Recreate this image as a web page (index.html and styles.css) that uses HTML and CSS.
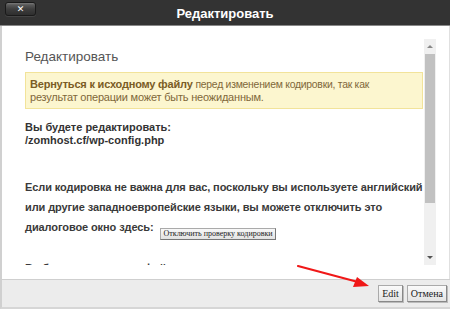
FILE: index.html
```html
<!DOCTYPE html>
<html>
<head>
<meta charset="utf-8">
<link rel="stylesheet" href="styles.css">
</head>
<body>
<div class="dialog">
  <div class="titlebar">
    <button class="close">&#x2715;</button>
    <div class="title">Редактировать</div>
  </div>
  <div class="main">
    <div class="scroller">
      <div class="content">
        <h2 class="heading">Редактировать</h2>
        <div class="warning"><b>Вернуться к исходному файлу</b> <span class="tight">перед изменением кодировки, так как</span> результат операции может быть неожиданным.</div>
        <div class="file">Вы будете редактировать:<br>/zomhost.cf/wp-config.php</div>
        <p class="para">Если кодировка не важна для вас, поскольку вы используете английский или другие западноевропейские языки, вы можете отключить это диалоговое окно здесь: <button class="smallbtn">Отключить проверку кодировки</button></p>
        <p class="cut">Выберите кодировку файла для редактирования</p>
      </div>
      <div class="vscroll">
        <div class="arrow up"></div>
        <div class="thumb"></div>
        <div class="spacer"></div>
        <div class="arrow down"></div>
      </div>
    </div>
  </div>
  <div class="footer">
    <button class="btn">Edit</button>
    <button class="btn">Отмена</button>
  </div>
  <svg class="pointer" width="450" height="309" viewBox="0 0 450 309">
    <line x1="298" y1="266" x2="358" y2="282" stroke="#f01818" stroke-width="2.2" stroke-linecap="round"/>
    <polygon points="369,286 353,287 357,277" fill="#f01818"/>
  </svg>
</div>
</body>
</html>
```
FILE: styles.css
```css
* { box-sizing: border-box; }
html, body { margin: 0; padding: 0; background: #fff; }
body { width: 450px; height: 309px; overflow: hidden; font-family: "Liberation Sans", Arial, sans-serif; }
.dialog { position: relative; width: 450px; height: 309px; display: flex; flex-direction: column; }
.titlebar {
  height: 26px; background: #333333; border-bottom: 1px solid #888;
  display: flex; align-items: center; position: relative;
}
.close {
  position: absolute; left: 5px; top: 2px; width: 31px; height: 14px;
  border: 1px solid #1a1a1a; border-radius: 3px; padding: 0;
  background: linear-gradient(#7a7a7a 0, #585858 2px, #3e3e3e 50%, #2e2e2e 100%);
  color: #fff; font: bold 9px/12px "DejaVu Sans", sans-serif; text-align: center;
  box-shadow: 0 1px 0 #444;
}
.title {
  flex: 1; text-align: center; color: #fff; font-weight: bold; font-size: 13px;
  font-family: "Liberation Sans", Arial, sans-serif; padding-top: 1px;
}
.main {
  flex: 1; border-left: 2px solid #d0d0d0; border-right: 1px solid #e0e0e0;
  padding: 13px 13px 14px 8px; min-height: 0;
}
.scroller { height: 100%; display: flex; overflow: hidden; }
.content { flex: 1; padding-left: 15px; padding-right: 1px; overflow: hidden; min-width: 0; }
.heading { margin: 9px 0 6px; font-weight: normal; font-size: 13.5px; color: #555; line-height: 18px; }
.warning {
  background: #fcf6cf; border: 1px solid #f2e39a; color: #80683a;
  font-size: 11px; line-height: 13px; padding: 5px 5px 4px 4px; letter-spacing: -0.2px;
}
.warning b { color: #7a5c25; }
.warning .tight { font-size: 10.4px; letter-spacing: -0.25px; }
.file { margin-top: 12px; font-weight: bold; font-size: 11px; line-height: 13px; color: #333; }
.para { margin: 30px 0 0; font-size: 11px; line-height: 20px; color: #3a3a3a; font-weight: bold; letter-spacing: -0.1px; }
.smallbtn {
  font: 8px/10px "Liberation Serif", "Times New Roman", serif; color: #222; letter-spacing: 0;
  background: linear-gradient(#f8f8f8, #e2e2e2); border: 1px solid #aaa;
  border-right-color: #777; border-bottom-color: #777; padding: 0 2px; margin-left: 4px;
  vertical-align: -4.5px;
}
.cut { margin: 18px 0 0; font-size: 11px; line-height: 20px; color: #3a3a3a; font-weight: bold; }
.vscroll { width: 12px; background: #f0f0f0; display: flex; flex-direction: column; }
.arrow { height: 15px; position: relative; }
.arrow::after {
  content: ""; position: absolute; left: 3px; border-left: 3px solid transparent; border-right: 3px solid transparent;
}
.arrow.up::after { top: 6px; border-bottom: 3px solid #888; }
.arrow.down::after { top: 6px; border-top: 3px solid #555; }
.thumb { height: 149px; background: #c1c1c1; margin: 0 1px; }
.spacer { flex: 1; }
.footer {
  height: 30px; background: #ececec; border-top: 1px solid #cfcfcf; border-bottom: 2px solid #d6d6d6;
  border-left: 2px solid #d0d0d0;
  display: flex; justify-content: flex-end; align-items: center; gap: 4px; padding: 0 3px 0 0;
}
.btn {
  font: 10px/13px "Liberation Serif", "Times New Roman", serif; color: #222;
  background: linear-gradient(#fafafa, #e4e4e4); border: 1px solid #aaa;
  border-right-color: #888; border-bottom-color: #888; padding: 1px 3px; height: 17px;
  box-shadow: 1px 1px 0 #bbb;
}
.pointer { position: absolute; left: 0; top: 0; pointer-events: none; }
```
